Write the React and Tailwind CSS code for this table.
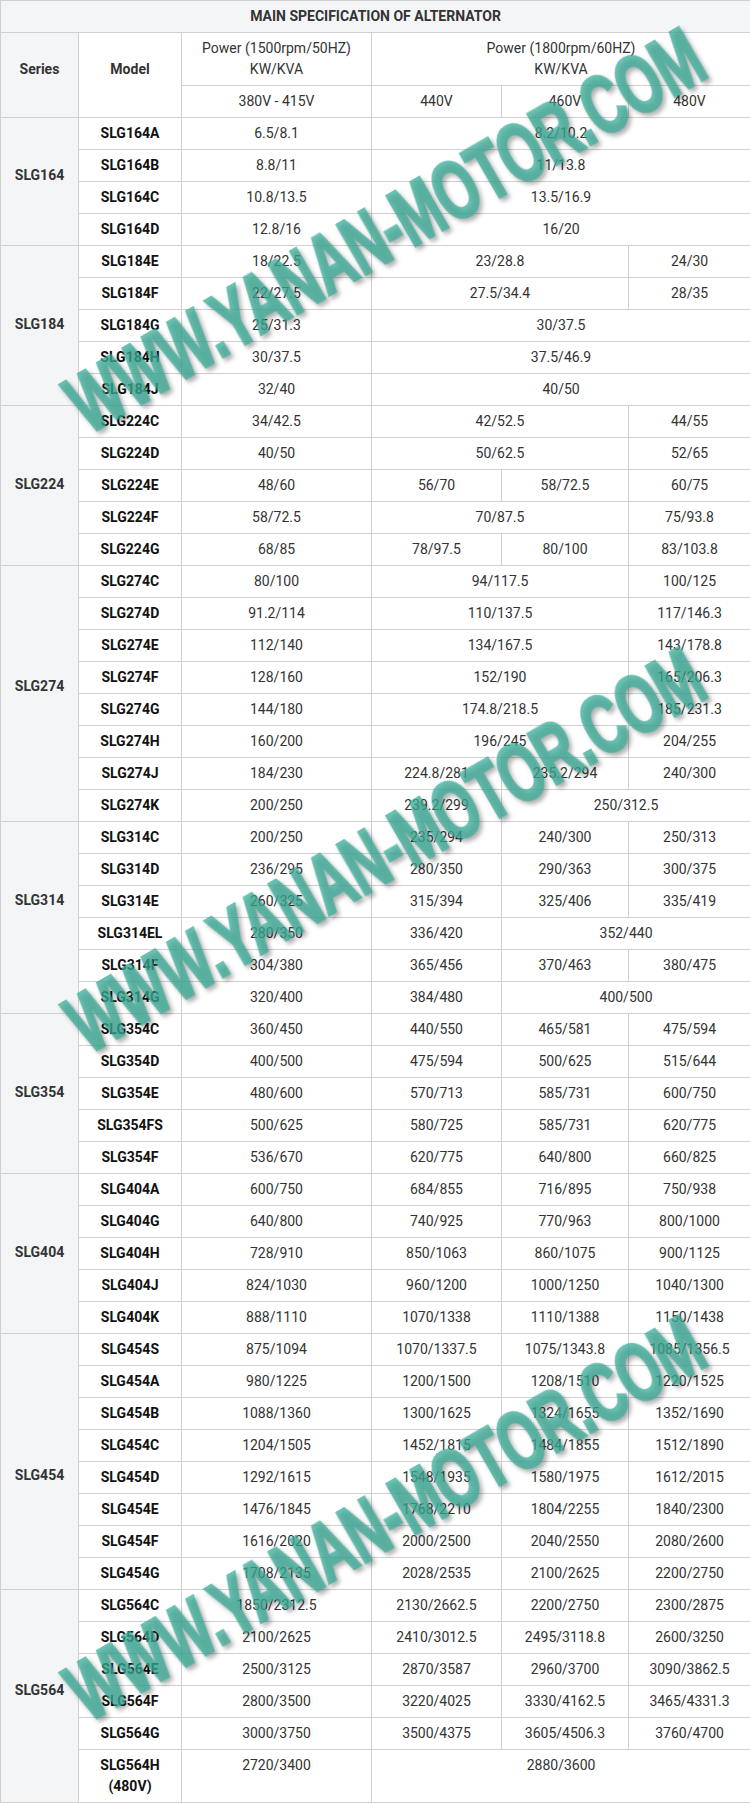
const groups = [
  {
    series: "SLG164",
    pad: "pt-[47px]",
    rows: [
      ["SLG164A", [["6.5/8.1"], ["8.2/10.2", 3]]],
      ["SLG164B", [["8.8/11"], ["11/13.8", 3]]],
      ["SLG164C", [["10.8/13.5"], ["13.5/16.9", 3]]],
      ["SLG164D", [["12.8/16"], ["16/20", 3]]],
    ],
  },
  {
    series: "SLG184",
    pad: "pt-[68px]",
    rows: [
      ["SLG184E", [["18/22.5"], ["23/28.8", 2], ["24/30"]]],
      ["SLG184F", [["22/27.5"], ["27.5/34.4", 2], ["28/35"]]],
      ["SLG184G", [["25/31.3"], ["30/37.5", 3]]],
      ["SLG184H", [["30/37.5"], ["37.5/46.9", 3]]],
      ["SLG184J", [["32/40"], ["40/50", 3]]],
    ],
  },
  {
    series: "SLG224",
    pad: "pt-[68px]",
    rows: [
      ["SLG224C", [["34/42.5"], ["42/52.5", 2], ["44/55"]]],
      ["SLG224D", [["40/50"], ["50/62.5", 2], ["52/65"]]],
      ["SLG224E", [["48/60"], ["56/70"], ["58/72.5"], ["60/75"]]],
      ["SLG224F", [["58/72.5"], ["70/87.5", 2], ["75/93.8"]]],
      ["SLG224G", [["68/85"], ["78/97.5"], ["80/100"], ["83/103.8"]]],
    ],
  },
  {
    series: "SLG274",
    pad: "pt-[110px]",
    rows: [
      ["SLG274C", [["80/100"], ["94/117.5", 2], ["100/125"]]],
      ["SLG274D", [["91.2/114"], ["110/137.5", 2], ["117/146.3"]]],
      ["SLG274E", [["112/140"], ["134/167.5", 2], ["143/178.8"]]],
      ["SLG274F", [["128/160"], ["152/190", 2], ["165/206.3"]]],
      ["SLG274G", [["144/180"], ["174.8/218.5", 2], ["185/231.3"]]],
      ["SLG274H", [["160/200"], ["196/245", 2], ["204/255"]]],
      ["SLG274J", [["184/230"], ["224.8/281"], ["235.2/294"], ["240/300"]]],
      ["SLG274K", [["200/250"], ["239.2/299"], ["250/312.5", 2]]],
    ],
  },
  {
    series: "SLG314",
    pad: "pt-[68px]",
    rows: [
      ["SLG314C", [["200/250"], ["235/294"], ["240/300"], ["250/313"]]],
      ["SLG314D", [["236/295"], ["280/350"], ["290/363"], ["300/375"]]],
      ["SLG314E", [["260/325"], ["315/394"], ["325/406"], ["335/419"]]],
      ["SLG314EL", [["280/350"], ["336/420"], ["352/440", 2]]],
      ["SLG314F", [["304/380"], ["365/456"], ["370/463"], ["380/475"]]],
      ["SLG314G", [["320/400"], ["384/480"], ["400/500", 2]]],
    ],
  },
  {
    series: "SLG354",
    pad: "pt-[68px]",
    rows: [
      ["SLG354C", [["360/450"], ["440/550"], ["465/581"], ["475/594"]]],
      ["SLG354D", [["400/500"], ["475/594"], ["500/625"], ["515/644"]]],
      ["SLG354E", [["480/600"], ["570/713"], ["585/731"], ["600/750"]]],
      ["SLG354FS", [["500/625"], ["580/725"], ["585/731"], ["620/775"]]],
      ["SLG354F", [["536/670"], ["620/775"], ["640/800"], ["660/825"]]],
    ],
  },
  {
    series: "SLG404",
    pad: "pt-[68px]",
    rows: [
      ["SLG404A", [["600/750"], ["684/855"], ["716/895"], ["750/938"]]],
      ["SLG404G", [["640/800"], ["740/925"], ["770/963"], ["800/1000"]]],
      ["SLG404H", [["728/910"], ["850/1063"], ["860/1075"], ["900/1125"]]],
      ["SLG404J", [["824/1030"], ["960/1200"], ["1000/1250"], ["1040/1300"]]],
      ["SLG404K", [["888/1110"], ["1070/1338"], ["1110/1388"], ["1150/1438"]]],
    ],
  },
  {
    series: "SLG454",
    pad: "pt-[131px]",
    rows: [
      ["SLG454S", [["875/1094"], ["1070/1337.5"], ["1075/1343.8"], ["1085/1356.5"]]],
      ["SLG454A", [["980/1225"], ["1200/1500"], ["1208/1510"], ["1220/1525"]]],
      ["SLG454B", [["1088/1360"], ["1300/1625"], ["1324/1655"], ["1352/1690"]]],
      ["SLG454C", [["1204/1505"], ["1452/1815"], ["1484/1855"], ["1512/1890"]]],
      ["SLG454D", [["1292/1615"], ["1548/1935"], ["1580/1975"], ["1612/2015"]]],
      ["SLG454E", [["1476/1845"], ["1768/2210"], ["1804/2255"], ["1840/2300"]]],
      ["SLG454F", [["1616/2020"], ["2000/2500"], ["2040/2550"], ["2080/2600"]]],
      ["SLG454G", [["1708/2135"], ["2028/2535"], ["2100/2625"], ["2200/2750"]]],
    ],
  },
  {
    series: "SLG564",
    pad: "pt-[90px]",
    rows: [
      ["SLG564C", [["1850/2312.5"], ["2130/2662.5"], ["2200/2750"], ["2300/2875"]]],
      ["SLG564D", [["2100/2625"], ["2410/3012.5"], ["2495/3118.8"], ["2600/3250"]]],
      ["SLG564E", [["2500/3125"], ["2870/3587"], ["2960/3700"], ["3090/3862.5"]]],
      ["SLG564F", [["2800/3500"], ["3220/4025"], ["3330/4162.5"], ["3465/4331.3"]]],
      ["SLG564G", [["3000/3750"], ["3500/4375"], ["3605/4506.3"], ["3760/4700"]]],
      [
        <>
          SLG564H
          <br />
          (480V)
        </>,
        [["2720/3400"], ["2880/3600", 3]],
      ],
    ],
  },
];

function Td({ children, span = 1, rows = 1, className = "" }) {
  return (
    <td
      colSpan={span}
      rowSpan={rows}
      className={`border border-[#d0d0d0] px-1 py-[5px] text-center align-top ${className}`}
    >
      {children}
    </td>
  );
}

// site watermark drawn over the table
function Watermark({ className }) {
  return (
    <div
      className={`pointer-events-none absolute left-[385px] -translate-x-1/2 -translate-y-1/2 whitespace-nowrap drop-shadow-[3px_3px_2px_rgba(0,0,0,0.4)] ${className}`}
    >
      <span className="inline-block rotate-[-30deg] scale-x-[0.65] font-['Liberation_Sans',Arial,sans-serif] text-[84px] font-bold leading-none text-[#3bae98] opacity-75 [-webkit-text-stroke:3px_#3bae98]">
        WWW.YANAN-MOTOR.COM
      </span>
    </div>
  );
}

export default function App() {
  return (
    <div className="relative w-[750px] overflow-hidden bg-white">
      <table className="w-[750px] table-fixed border-collapse font-['Roboto',sans-serif] text-[14px] leading-[21px] text-[#333]">
        <colgroup>
          <col className="w-[78px]" />
          <col className="w-[103px]" />
          <col className="w-[190px]" />
          <col className="w-[130px]" />
          <col className="w-[127px]" />
          <col className="w-[122px]" />
        </colgroup>
        <tbody>
          {/* title */}
          <tr>
            <Td span={6} className="bg-[#f4f5f7] font-bold uppercase">
              Main Specification of Alternator
            </Td>
          </tr>

          {/* header */}
          <tr>
            <Td rows={2} className="bg-[#f4f5f7] pt-[26px] font-bold">
              Series
            </Td>
            <Td rows={2} className="pt-[26px] font-bold">
              Model
            </Td>
            <Td>
              Power (1500rpm/50HZ)
              <br />
              KW/KVA
            </Td>
            <Td span={3}>
              Power (1800rpm/60HZ)
              <br />
              KW/KVA
            </Td>
          </tr>
          <tr>
            <Td>380V - 415V</Td>
            <Td>440V</Td>
            <Td>460V</Td>
            <Td>480V</Td>
          </tr>

          {/* data */}
          {groups.map((g) =>
            g.rows.map(([model, cells], i) => (
              <tr key={g.series + i}>
                {i === 0 && (
                  <Td rows={g.rows.length} className={`bg-[#f4f5f7] font-bold ${g.pad}`}>
                    {g.series}
                  </Td>
                )}
                <Td className="font-bold text-[#111]">{model}</Td>
                {cells.map(([text, span], j) => (
                  <Td key={j} span={span || 1}>
                    {text}
                  </Td>
                ))}
              </tr>
            ))
          )}
        </tbody>
      </table>

      <Watermark className="top-[230px]" />
      <Watermark className="top-[850px]" />
      <Watermark className="top-[1518px]" />
    </div>
  );
}
